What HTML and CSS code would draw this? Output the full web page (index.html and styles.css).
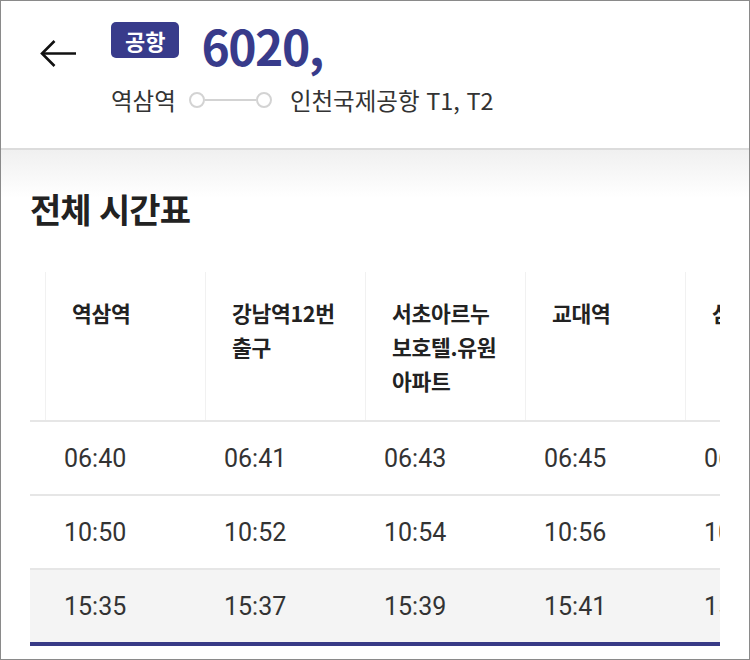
FILE: index.html
```html
<!DOCTYPE html>
<html lang="ko">
<head>
<meta charset="utf-8">
<title>6020 전체 시간표</title>
<link rel="stylesheet" href="styles.css">
</head>
<body>
<div class="frame">
  <header class="top">
    <button class="back" aria-label="뒤로">
      <svg width="36" height="28" viewBox="0 0 36 28" fill="none" stroke="#111" stroke-width="2.6" stroke-linejoin="miter">
        <path d="M36 13.5 H2"/>
        <path d="M14.5 1 L2 13.5 L14.5 26"/>
      </svg>
    </button>
    <div class="info">
      <div class="title-row">
        <span class="badge">공항</span>
        <span class="num">6020,</span>
      </div>
      <div class="route">
        <span class="stop">역삼역</span>
        <span class="track"><i class="dot"></i><i class="line"></i><i class="dot"></i></span>
        <span class="stop">인천국제공항 T1, T2</span>
      </div>
    </div>
  </header>
  <main class="content">
    <h2 class="section-title">전체 시간표</h2>
    <div class="table-wrap">
      <div class="trow thead">
        <div class="th">역삼역</div>
        <div class="th">강남역12번 출구</div>
        <div class="th">서초아르누보호텔.유원아파트</div>
        <div class="th">교대역</div>
        <div class="th">삼성역</div>
      </div>
      <div class="trow">
        <div class="td">06:40</div>
        <div class="td">06:41</div>
        <div class="td">06:43</div>
        <div class="td">06:45</div>
        <div class="td">06:47</div>
      </div>
      <div class="trow">
        <div class="td">10:50</div>
        <div class="td">10:52</div>
        <div class="td">10:54</div>
        <div class="td">10:56</div>
        <div class="td">10:58</div>
      </div>
      <div class="trow last">
        <div class="td">15:35</div>
        <div class="td">15:37</div>
        <div class="td">15:39</div>
        <div class="td">15:41</div>
        <div class="td">15:43</div>
      </div>
    </div>
  </main>
</div>
</body>
</html>
```
FILE: styles.css
```css
* { box-sizing: border-box; }
html, body { margin: 0; padding: 0; background: #fff; }
body {
  font-family: "Noto Sans CJK KR", "Noto Sans", sans-serif;
  color: #333;
}
.frame {
  width: 750px;
  height: 660px;
  border: 1px solid #8a8a8a;
  overflow: hidden;
  background: #fff;
}
.top {
  height: 149px;
  display: flex;
  align-items: flex-start;
  padding: 21px 0 0 39px;
  border-bottom: 2px solid #dcdcdc;
}
.back {
  width: 36px;
  height: 28px;
  margin: 18px 35px 0 0;
  padding: 0;
  border: 0;
  background: none;
  display: flex;
}
.info {
  display: flex;
  flex-direction: column;
  gap: 27px;
}
.title-row {
  display: flex;
  align-items: center;
  gap: 22px;
  height: 36px;
}
.badge {
  display: inline-flex;
  align-items: center;
  justify-content: center;
  height: 36px;
  padding: 0 14px;
  border-radius: 5px;
  background: #383b8b;
  color: #fff;
  font-size: 22px;
  font-weight: 700;
  line-height: 1;
}
.num {
  color: #383b8b;
  font-size: 48px;
  font-weight: 700;
  letter-spacing: -1.5px;
  line-height: 36px;
  position: relative;
  top: 5px;
}
.route {
  display: flex;
  align-items: center;
  height: 30px;
  font-size: 23.5px;
  color: #333;
}
.track {
  display: flex;
  align-items: center;
  margin: 0 18px 0 13px;
}
.dot {
  width: 16px;
  height: 16px;
  border: 2px solid #d3d3d3;
  border-radius: 50%;
}
.line {
  width: 51px;
  height: 2px;
  background: #d3d3d3;
}
.content {
  padding: 0 29px;
  height: 510px;
  background: linear-gradient(#f0f0f0 0, #fff 48px);
}
.section-title {
  margin: 0;
  padding-top: 38px;
  font-size: 34px;
  line-height: 42px;
  font-weight: 700;
  color: #222;
  letter-spacing: -1px;
}
.table-wrap {
  margin-top: 42px;
  width: 690px;
  overflow: hidden;
}
.trow {
  display: flex;
  width: 815px;
  padding-left: 15px;
  border-bottom: 2px solid #e6e6e6;
}
.trow.last {
  background: #f4f4f4;
  border-bottom: 4px solid #383a86;
}
.th {
  flex: 0 0 160px;
  border-left: 1px solid #f1f1f1;
  padding: 24px 28px 22px 26px;
  height: 148px;
  font-size: 21.5px;
  line-height: 34px;
  font-weight: 700;
  color: #222;
  letter-spacing: -0.3px;
}
.td {
  flex: 0 0 160px;
  height: 72px;
  padding-left: 19px;
  display: flex;
  align-items: center;
  font-family: Roboto, "Liberation Sans", sans-serif;
  font-size: 25px;
  color: #333;
}
```
